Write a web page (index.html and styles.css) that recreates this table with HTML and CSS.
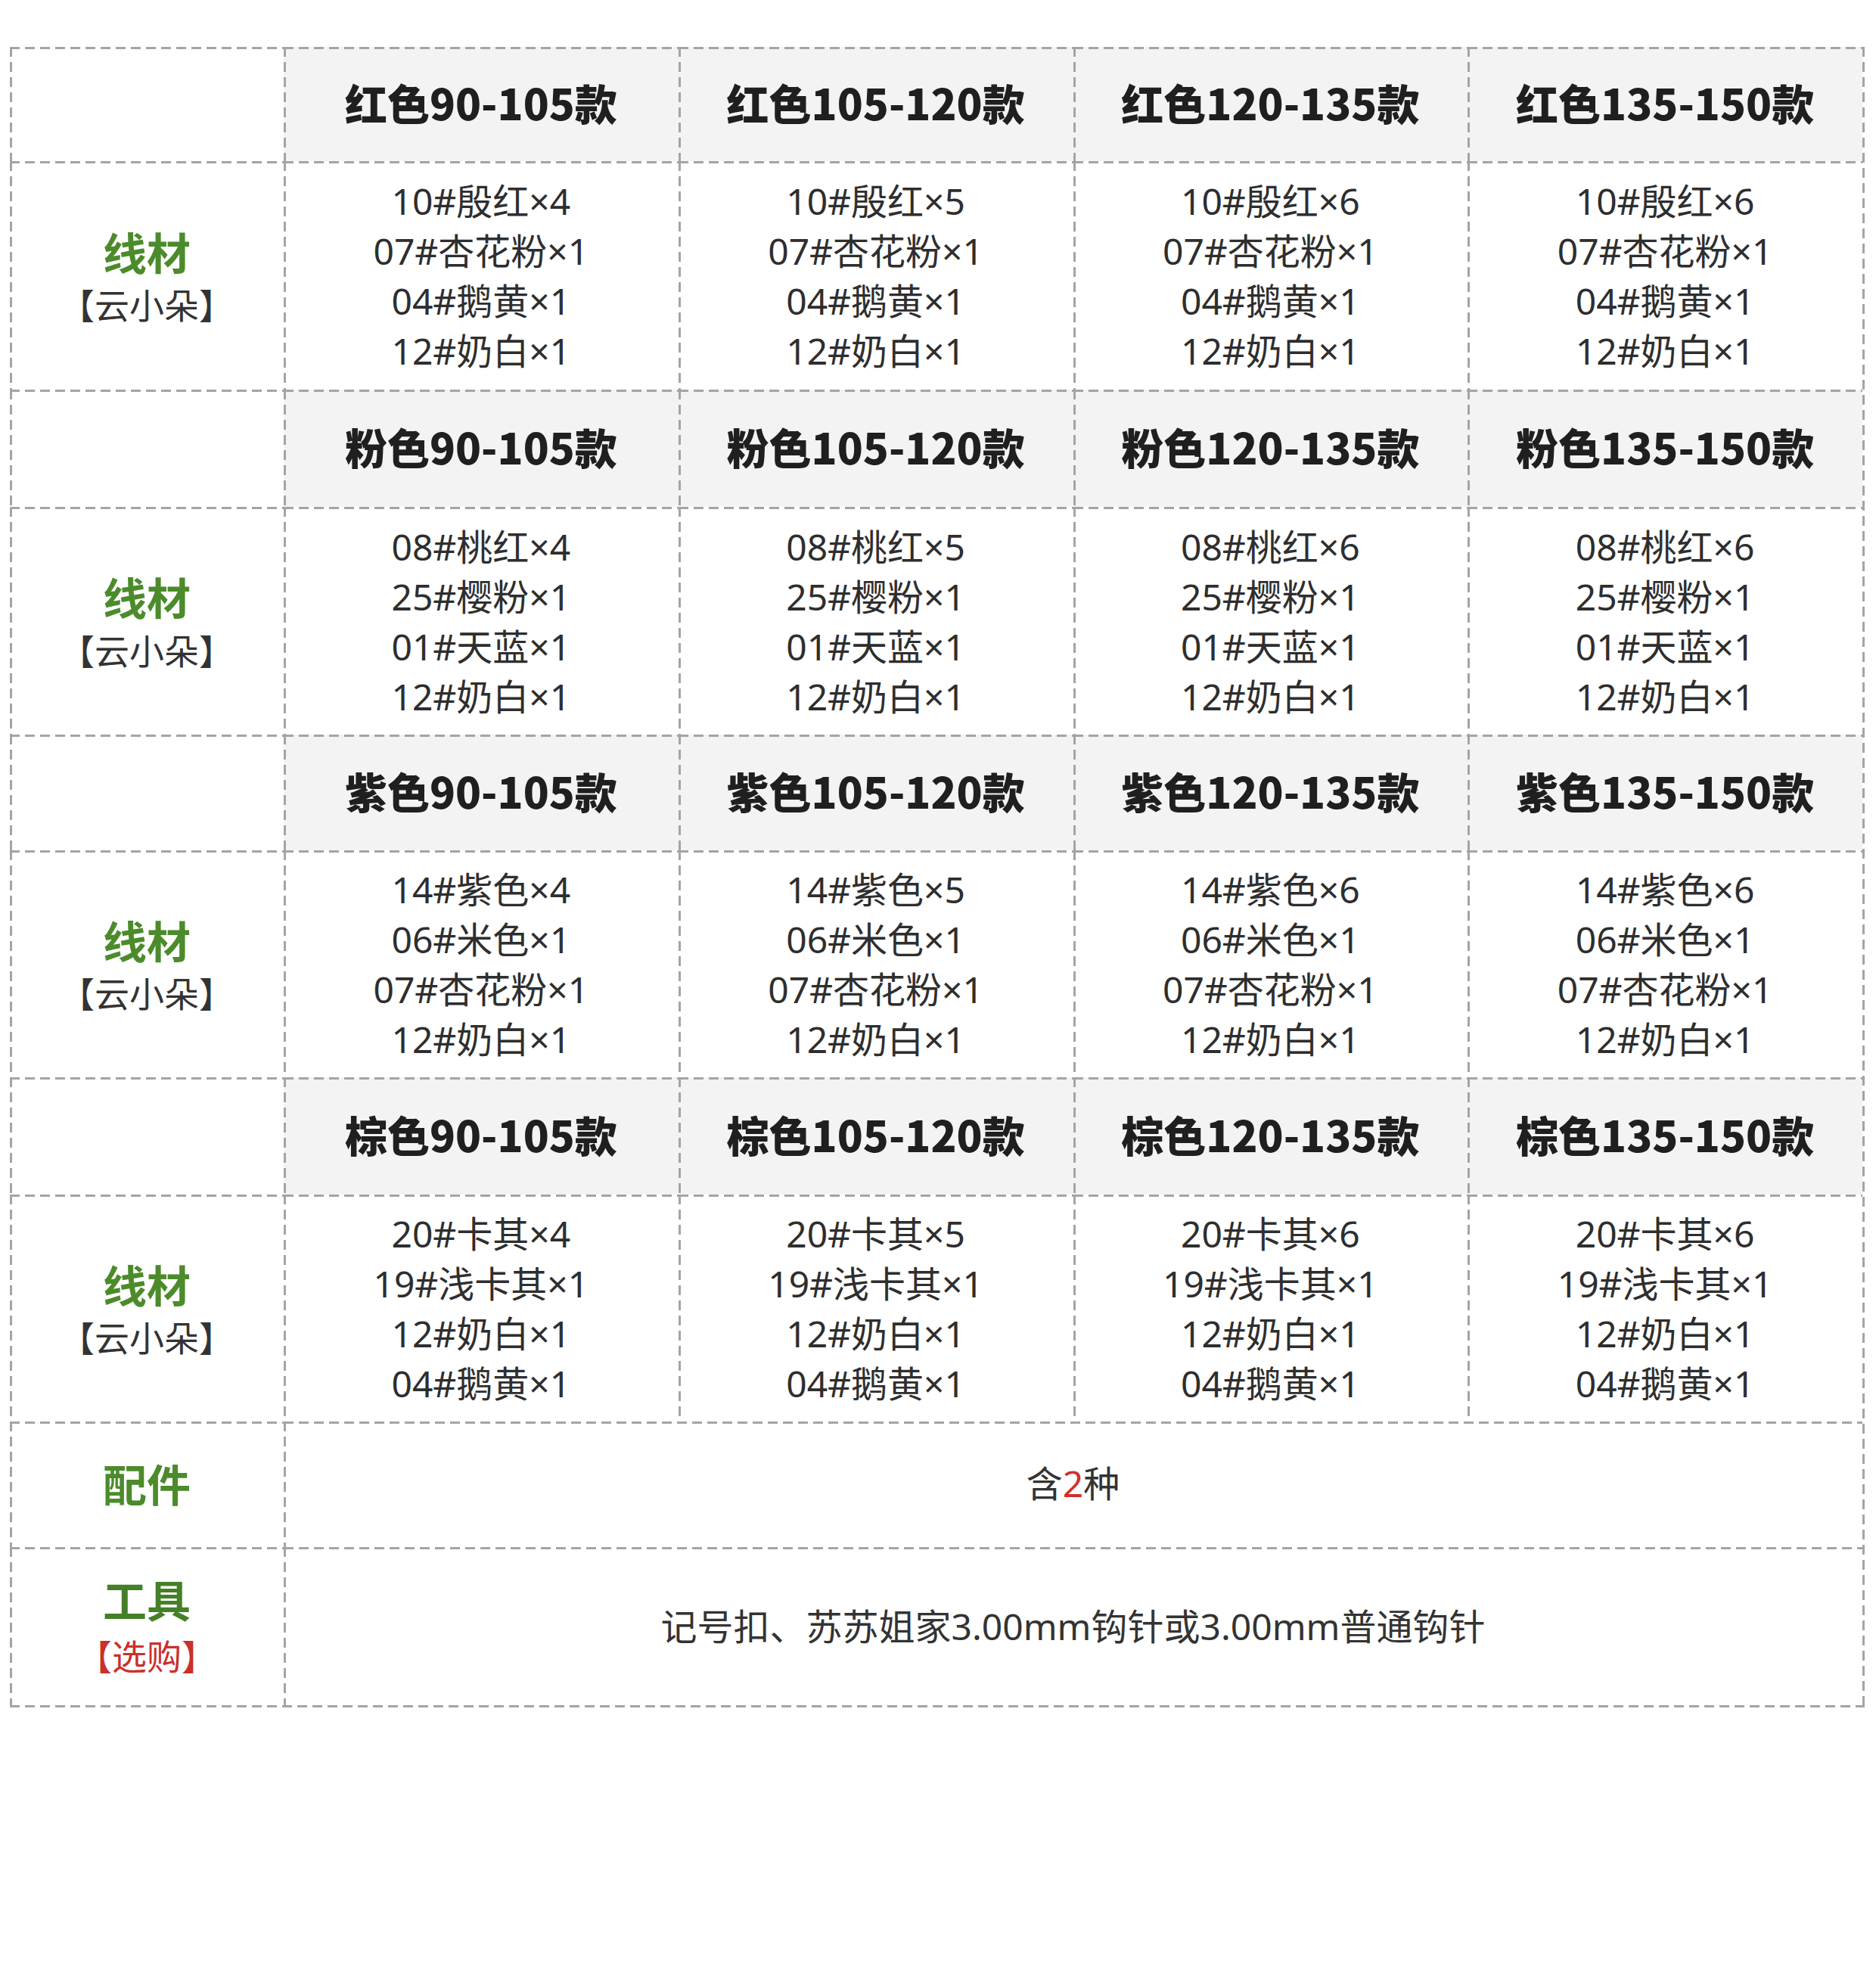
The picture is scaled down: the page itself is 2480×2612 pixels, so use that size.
FILE: index.html
```html
<!DOCTYPE html>
<html lang="zh-CN">
<head>
<meta charset="utf-8">
<title>线材配置表</title>
<link rel="stylesheet" href="styles.css">
</head>
<body>
<div class="spec">
  <div class="cell corner"></div>
  <div class="cell head">红色90-105款</div>
  <div class="cell head">红色105-120款</div>
  <div class="cell head">红色120-135款</div>
  <div class="cell head">红色135-150款</div>

  <div class="cell label"><span class="title">线材</span><span class="sub">【云小朵】</span></div>
  <div class="cell items"><span>10#殷红×4</span><span>07#杏花粉×1</span><span>04#鹅黄×1</span><span>12#奶白×1</span></div>
  <div class="cell items"><span>10#殷红×5</span><span>07#杏花粉×1</span><span>04#鹅黄×1</span><span>12#奶白×1</span></div>
  <div class="cell items"><span>10#殷红×6</span><span>07#杏花粉×1</span><span>04#鹅黄×1</span><span>12#奶白×1</span></div>
  <div class="cell items"><span>10#殷红×6</span><span>07#杏花粉×1</span><span>04#鹅黄×1</span><span>12#奶白×1</span></div>

  <div class="cell corner"></div>
  <div class="cell head">粉色90-105款</div>
  <div class="cell head">粉色105-120款</div>
  <div class="cell head">粉色120-135款</div>
  <div class="cell head">粉色135-150款</div>

  <div class="cell label"><span class="title">线材</span><span class="sub">【云小朵】</span></div>
  <div class="cell items"><span>08#桃红×4</span><span>25#樱粉×1</span><span>01#天蓝×1</span><span>12#奶白×1</span></div>
  <div class="cell items"><span>08#桃红×5</span><span>25#樱粉×1</span><span>01#天蓝×1</span><span>12#奶白×1</span></div>
  <div class="cell items"><span>08#桃红×6</span><span>25#樱粉×1</span><span>01#天蓝×1</span><span>12#奶白×1</span></div>
  <div class="cell items"><span>08#桃红×6</span><span>25#樱粉×1</span><span>01#天蓝×1</span><span>12#奶白×1</span></div>

  <div class="cell corner"></div>
  <div class="cell head">紫色90-105款</div>
  <div class="cell head">紫色105-120款</div>
  <div class="cell head">紫色120-135款</div>
  <div class="cell head">紫色135-150款</div>

  <div class="cell label"><span class="title">线材</span><span class="sub">【云小朵】</span></div>
  <div class="cell items"><span>14#紫色×4</span><span>06#米色×1</span><span>07#杏花粉×1</span><span>12#奶白×1</span></div>
  <div class="cell items"><span>14#紫色×5</span><span>06#米色×1</span><span>07#杏花粉×1</span><span>12#奶白×1</span></div>
  <div class="cell items"><span>14#紫色×6</span><span>06#米色×1</span><span>07#杏花粉×1</span><span>12#奶白×1</span></div>
  <div class="cell items"><span>14#紫色×6</span><span>06#米色×1</span><span>07#杏花粉×1</span><span>12#奶白×1</span></div>

  <div class="cell corner"></div>
  <div class="cell head">棕色90-105款</div>
  <div class="cell head">棕色105-120款</div>
  <div class="cell head">棕色120-135款</div>
  <div class="cell head">棕色135-150款</div>

  <div class="cell label"><span class="title">线材</span><span class="sub">【云小朵】</span></div>
  <div class="cell items"><span>20#卡其×4</span><span>19#浅卡其×1</span><span>12#奶白×1</span><span>04#鹅黄×1</span></div>
  <div class="cell items"><span>20#卡其×5</span><span>19#浅卡其×1</span><span>12#奶白×1</span><span>04#鹅黄×1</span></div>
  <div class="cell items"><span>20#卡其×6</span><span>19#浅卡其×1</span><span>12#奶白×1</span><span>04#鹅黄×1</span></div>
  <div class="cell items"><span>20#卡其×6</span><span>19#浅卡其×1</span><span>12#奶白×1</span><span>04#鹅黄×1</span></div>

  <div class="cell label acc"><span class="title">配件</span></div>
  <div class="cell wide acc">含<em class="red">2</em>种</div>

  <div class="cell label tool"><span class="title">工具</span><span class="sub red">【选购】</span></div>
  <div class="cell wide tool">记号扣、苏苏姐家3.00mm钩针或3.00mm普通钩针</div>
</div>
</body>
</html>
```

FILE: styles.css
```css
html, body {
  margin: 0;
  padding: 0;
  background: #ffffff;
}

body {
  padding: 62px 15px 0 13px;
  font-family: "Noto Sans CJK SC", "Noto Sans", sans-serif;
  color: #333333;
  height: 2612px;
  box-sizing: border-box;
}

.spec {
  display: grid;
  grid-template-columns: 362px repeat(4, 1fr);
  grid-template-rows: 151px 302px 155px 301px 153px 300px 155px 300px 166px 209px;
  width: 2452px;
  box-sizing: border-box;
  padding: 0 3px 3px 0;
  background-image:
    repeating-linear-gradient(90deg, #a4a4a4 0 13px, transparent 13px 20px),
    repeating-linear-gradient(180deg, #a4a4a4 0 13px, transparent 13px 20px);
  background-size: 100% 3px, 3px 100%;
  background-position: left bottom, right top;
  background-repeat: no-repeat;
}

.cell {
  display: flex;
  flex-direction: column;
  align-items: center;
  justify-content: center;
  text-align: center;
  background-image:
    repeating-linear-gradient(90deg, #a4a4a4 0 13px, transparent 13px 20px),
    repeating-linear-gradient(180deg, #a4a4a4 0 13px, transparent 13px 20px);
  background-size: 100% 3px, 3px 100%;
  background-position: left top, left top;
  background-repeat: no-repeat;
}

.head {
  background-color: #f3f3f3;
  font-size: 56px;
  font-weight: 900;
  color: #1f1f1f;
  line-height: 1.2;
  padding-bottom: 6px;
}

.items {
  font-family: "Noto Sans", "Noto Sans CJK SC", sans-serif;
  font-size: 48px;
  line-height: 66px;
  color: #2e2e2e;
  padding-top: 2px;
}

.items span {
  display: block;
}

.label .title {
  font-size: 58px;
  font-weight: 700;
  color: #4c8b2b;
  line-height: 1.25;
}

.label .sub {
  font-size: 46px;
  color: #333333;
  line-height: 1.3;
  margin-top: 4px;
}

.label.tool {
  padding-bottom: 4px;
}

.label.tool .sub {
  margin-top: 8px;
}

.tool .title {
  color: #457f27;
}

.label .sub.red {
  color: #c9302c;
}

.label.acc {
  padding-bottom: 4px;
}

.wide {
  grid-column: 2 / span 4;
  flex-direction: row;
  font-family: "Noto Sans", "Noto Sans CJK SC", sans-serif;
  font-size: 48px;
  line-height: 1.3;
  color: #333333;
}

.wide.acc {
  padding-bottom: 2px;
}

.wide.tool {
  padding-top: 2px;
}

.red {
  color: #d0302c;
  font-style: normal;
}
```
